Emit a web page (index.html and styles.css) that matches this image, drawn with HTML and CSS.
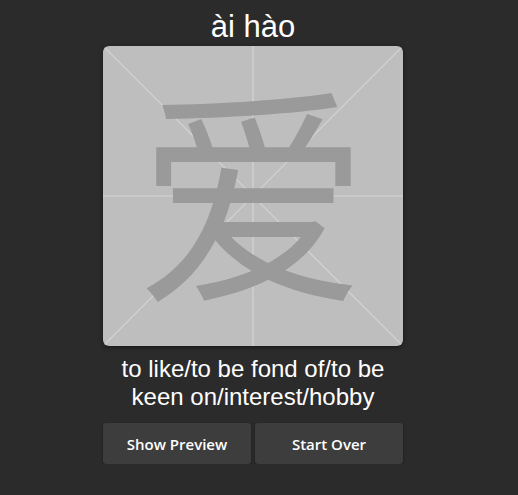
FILE: index.html
```html
<!DOCTYPE html>
<html>
<head>
<meta charset="utf-8">
<link rel="stylesheet" href="styles.css">
</head>
<body>
<main class="app">
  <h1 class="pinyin">ài hào</h1>
  <div class="board">
    <svg class="grid" width="300" height="300" viewBox="0 0 300 300">
      <line x1="0" y1="0" x2="300" y2="300"/>
      <line x1="300" y1="0" x2="0" y2="300"/>
      <line x1="150" y1="0" x2="150" y2="300"/>
      <line x1="0" y1="150" x2="300" y2="150"/>
    </svg>
    <span class="hanzi">爱</span>
  </div>
  <p class="definition">to like/to be fond of/to be keen on/interest/hobby</p>
  <div class="actions">
    <button class="btn">Show Preview</button>
    <button class="btn">Start Over</button>
  </div>
</main>
</body>
</html>
```
FILE: styles.css
```css
html, body {
  margin: 0;
  padding: 0;
  background: #2b2b2b;
}
.app {
  width: 300px;
  margin: 0 auto;
  padding: 9px 0 0 0;
  display: flex;
  flex-direction: column;
  align-items: center;
  position: relative;
  left: -6px;
}
.pinyin {
  margin: 0;
  font-family: "Liberation Sans", Arial, sans-serif;
  font-weight: normal;
  font-size: 31px;
  line-height: 35px;
  color: #ffffff;
}
.board {
  position: relative;
  width: 300px;
  height: 300px;
  margin-top: 2px;
  background: #bdbebd;
  border-radius: 6px;
  box-shadow: 0 1px 4px rgba(0,0,0,0.5);
  overflow: hidden;
  display: flex;
  align-items: center;
  justify-content: center;
}
.grid {
  position: absolute;
  left: 0;
  top: 0;
}
.grid line {
  stroke: #d4d4d4;
  stroke-width: 1.2;
}
.hanzi {
  position: relative;
  top: -12px;
  font-family: "Noto Sans CJK SC", sans-serif;
  font-size: 232px;
  line-height: 270px;
  color: #9a9a9a;
}
.definition {
  margin: 9px 0 0;
  font-family: "Liberation Sans", Arial, sans-serif;
  font-size: 24px;
  line-height: 28px;
  color: #ffffff;
  text-align: center;
}
.actions {
  margin-top: 12px;
  display: flex;
  gap: 4px;
}
.btn {
  width: 148px;
  height: 41px;
  background: #3d3d3d;
  color: #ffffff;
  border: none;
  border-radius: 3px;
  font-family: "Open Sans", "Noto Sans", sans-serif;
  font-weight: 600;
  font-size: 15px;
  box-shadow: 0 1px 2px rgba(0,0,0,0.5);
  cursor: pointer;
}
```
